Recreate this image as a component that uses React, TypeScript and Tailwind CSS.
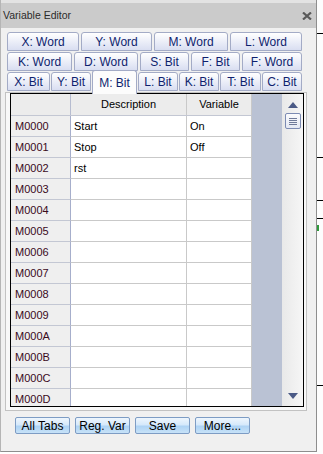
import React from "react";

const row1 = [
  { label: "X: Word", w: "w-[72px]" },
  { label: "Y: Word", w: "w-[71px]" },
  { label: "M: Word", w: "w-[74px]" },
  { label: "L: Word", w: "w-[72px]" },
];

const row2 = [
  { label: "K: Word", w: "w-[65px]" },
  { label: "D: Word", w: "w-[64px]" },
  { label: "S: Bit", w: "w-[49px]" },
  { label: "F: Bit", w: "w-[49px]" },
  { label: "F: Word", w: "w-[60px]" },
];

const row3 = [
  { label: "X: Bit", w: "w-[43px]" },
  { label: "Y: Bit", w: "w-[40px]" },
  { label: "M: Bit", w: "w-[45px]", active: true },
  { label: "L: Bit", w: "w-[40px]" },
  { label: "K: Bit", w: "w-[40px]" },
  { label: "T: Bit", w: "w-[41px]" },
  { label: "C: Bit", w: "w-[40px]" },
];

const rows = [
  { id: "M0000", desc: "Start", v: "On" },
  { id: "M0001", desc: "Stop", v: "Off" },
  { id: "M0002", desc: "rst", v: "" },
  { id: "M0003", desc: "", v: "" },
  { id: "M0004", desc: "", v: "" },
  { id: "M0005", desc: "", v: "" },
  { id: "M0006", desc: "", v: "" },
  { id: "M0007", desc: "", v: "" },
  { id: "M0008", desc: "", v: "" },
  { id: "M0009", desc: "", v: "" },
  { id: "M000A", desc: "", v: "" },
  { id: "M000B", desc: "", v: "" },
  { id: "M000C", desc: "", v: "" },
  { id: "M000D", desc: "", v: "" },
];

const font = { fontFamily: '"Liberation Sans", Arial, sans-serif' };

function Tab({ label, w }: { label: string; w: string }) {
  return (
    <div
      className={`${w} h-[19px] flex items-center justify-center rounded-t-[3px] border border-[#a3abc6] bg-gradient-to-b from-[#ffffff] to-[#d9def1] text-[12px] text-[#0f1f6e]`}
    >
      {label}
    </div>
  );
}

function Button({ label }: { label: string }) {
  return (
    <div className="w-[55px] h-[17px] flex items-center justify-center rounded-[2px] border border-[#7d9cc4] bg-[linear-gradient(to_bottom,#eef6fd_0%,#d6e9fb_45%,#aed3f4_55%,#c7e2f8_100%)] text-[12px] text-black">
      {label}
    </div>
  );
}

export default function App() {
  return (
    <div className="flex w-[323px] h-[454px] bg-white" style={font}>
      <div className="w-[317px] h-[452px] flex flex-col border-r border-b border-l border-[#8e8e8e] border-l-[#b5b5b5] bg-[#f0f0f0]">
        {/* title bar */}
        <div className="h-[28px] shrink-0 flex items-center justify-between border-t-[3px] border-[#e3e3e3] bg-[#cbcbcb] pl-[2px] pr-[4px]">
          <span className="text-[10.5px] text-[#2b2b2b]">Variable Editor</span>
          <svg width="10" height="8" viewBox="0 0 10 8" className="mr-[0px]">
            <path d="M1 0.5 L9 7.5 M9 0.5 L1 7.5" stroke="#5a5a5a" strokeWidth="2.2" />
          </svg>
        </div>

        <div className="flex flex-col pl-[4px]">
          {/* tabs */}
          <div className="mt-[4px] ml-[2px] flex gap-[2px]">
            {row1.map((t) => (
              <Tab key={t.label} {...t} />
            ))}
          </div>
          <div className="mt-px ml-[2px] flex gap-[2px]">
            {row2.map((t) => (
              <Tab key={t.label} {...t} />
            ))}
          </div>
          <div className="mt-px ml-[2px] h-[21px] flex items-start gap-px">
            {row3.map((t) =>
              t.active ? (
                <div
                  key={t.label}
                  className={`${t.w} h-[24px] -mt-[2px] relative z-10 flex items-start justify-center pt-[3px] rounded-t-[3px] border border-b-0 border-[#a3abc6] bg-[#fcfcfc] text-[12px] text-[#0f1f6e]`}
                >
                  {t.label}
                </div>
              ) : (
                <Tab key={t.label} label={t.label} w={t.w} />
              )
            )}
          </div>

          {/* panel */}
          <div className="-mt-px w-[302px] h-[319px] border border-[#c2c2c2] bg-[#f8f8f8] pl-[4px] pb-[3px]">
            <div className="w-[294px] h-[314px] border border-black bg-white flex overflow-hidden">
              <div className="w-[241px] flex flex-col">
                <div className="h-[22px] shrink-0 flex border-b border-[#c3c7d3] bg-[#ececec] text-[11px] text-black">
                  <div className="w-[60px] border-r border-[#b6bcd0]" />
                  <div className="w-[116px] border-r border-[#c9c9c9] flex items-center justify-center">
                    Description
                  </div>
                  <div className="w-[65px] border-r border-[#c9c9c9] flex items-center justify-center">
                    Variable
                  </div>
                </div>
                {rows.map((r) => (
                  <div key={r.id} className="h-[21px] shrink-0 flex text-[11px]">
                    <div className="w-[60px] flex items-center pl-[4px] border-r border-b border-r-[#a6aecb] border-b-[#c3c7d3] bg-[#efefef] text-[#3a0a1c]">
                      {r.id}
                    </div>
                    <div className="w-[116px] flex items-center pl-[3px] border-r border-b border-[#c9c9c9] text-black">
                      {r.desc}
                    </div>
                    <div className="w-[65px] flex items-center pl-[3px] border-r border-b border-[#c9c9c9] text-black">
                      {r.v}
                    </div>
                  </div>
                ))}
              </div>
              <div className="w-[30px] bg-[#bac2d4]" />
              {/* scrollbar */}
              <div className="w-[21px] flex flex-col items-center bg-gradient-to-r from-[#e9e9e9] to-[#f6f6f6]">
                <svg width="10" height="6" viewBox="0 0 10 6" className="mt-[8px]">
                  <path d="M0 6 L5 0 L10 6 Z" fill="#4b5a86" />
                </svg>
                <div className="mt-[5px] w-[16px] h-[16px] rounded-[2px] border border-[#7c8bb3] bg-gradient-to-b from-[#fbfbfd] to-[#e4e8f3] flex flex-col items-center justify-center gap-[1px]">
                  <div className="w-[8px] h-px bg-[#6f7a99]" />
                  <div className="w-[8px] h-px bg-[#6f7a99]" />
                  <div className="w-[8px] h-px bg-[#6f7a99]" />
                  <div className="w-[8px] h-px bg-[#6f7a99]" />
                </div>
                <div className="flex-1" />
                <svg width="10" height="6" viewBox="0 0 10 6" className="mb-[7px]">
                  <path d="M0 0 L5 6 L10 0 Z" fill="#4b5a86" />
                </svg>
              </div>
            </div>
          </div>

          {/* buttons */}
          <div className="mt-[6px] ml-[10px] flex gap-[5px]">
            <Button label="All Tabs" />
            <Button label="Reg. Var" />
            <Button label="Save" />
            <Button label="More..." />
          </div>
        </div>
      </div>

      {/* background behind the window */}
      <div className="relative flex-1 h-[454px] bg-[#fdfdfd]">
        <div className="absolute left-0 right-0 top-[33px] h-px bg-black" />
        <div className="absolute left-0 right-0 top-[157px] h-px bg-black" />
        <div className="absolute left-0 right-0 top-[200px] h-px bg-black" />
        <div className="absolute left-0 right-0 top-[218px] h-px bg-black" />
        <div className="absolute left-0 w-[2px] top-[225px] h-[6px] bg-[#2f9a3c]" />
        <div className="absolute left-0 right-0 top-[385px] h-px bg-black" />
      </div>
    </div>
  );
}
